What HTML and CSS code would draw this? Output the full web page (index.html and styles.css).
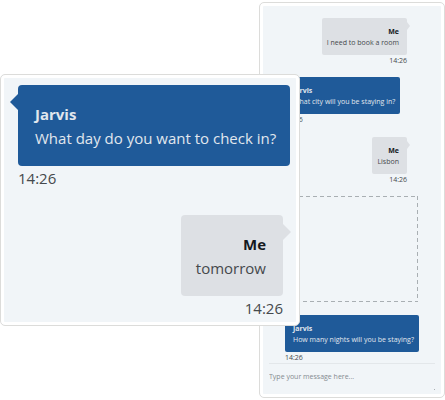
FILE: index.html
```html
<!DOCTYPE html>

<html lang="en">

<head>
    <title>Hotel chat bot</title>
    <meta charset="utf-8">

    <link rel="stylesheet" href="styles.css">
</head>

<body>
    <main class="stage">
        <section class="card chat">
            <div class="message me">
                <div class="bubble">
                    <strong>Me</strong>
                    <p>I need to book a room</p>
                </div>
                <time>14:26</time>
            </div>
            <div class="message bot">
                <div class="bubble">
                    <strong>Jarvis</strong>
                    <p>What city will you be staying in?</p>
                </div>
                <time>14:26</time>
            </div>
            <div class="message me">
                <div class="bubble">
                    <strong>Me</strong>
                    <p>Lisbon</p>
                </div>
                <time>14:26</time>
            </div>
            <svg class="selection" aria-hidden="true">
                <rect width="100%" height="100%" />
            </svg>
            <div class="message bot">
                <div class="bubble">
                    <strong>Jarvis</strong>
                    <p>How many nights will you be staying?</p>
                </div>
                <time>14:26</time>
            </div>
            <form class="compose">
                <textarea aria-label="Message" placeholder="Type your message here..."></textarea>
            </form>
        </section>

        <section class="card zoomed">
            <div class="message bot">
                <div class="bubble">
                    <strong>Jarvis</strong>
                    <p>What day do you want to check in?</p>
                </div>
                <time>14:26</time>
            </div>
            <div class="message me">
                <div class="bubble">
                    <strong>Me</strong>
                    <p>tomorrow</p>
                </div>
                <time>14:26</time>
            </div>
        </section>
    </main>
</body>

</html>
```

FILE: styles.css
```css
body {
    margin: 0;
    background: #fff;
    font-family: "Open Sans", "Noto Sans", sans-serif;
    color: #45494c;
}

p {
    margin: 0;
}

/* the zoomed card overlaps the chat in the middle column */
.stage {
    display: grid;
    grid-template-columns: 259fr 41fr 145fr;
    align-items: start;
}

.card {
    grid-row: 1;
    box-sizing: border-box;
    border: 1px solid #dcdcda;
    border-radius: 5px;
    background: #f1f5f8;
    box-shadow: inset 0 0 0 3px #fff;
}

.chat {
    grid-column: 2 / 4;
    margin-top: 2px;
    padding: 15px 9px 3px;
    font-size: 7px;
    line-height: 11px;
}

.zoomed {
    z-index: 1;
    grid-column: 1 / 3;
    margin-top: 74px;
    padding: 10px 9px 5px 17px;
    font-size: 15px;
    line-height: 24px;
}

.message {
    display: flex;
    flex-direction: column;
    align-items: flex-start;
}

.me {
    align-items: flex-end;
    text-align: right;
}

.bubble {
    position: relative;
    border-radius: 2px;
    padding: 8px 5px 7px 8px;
    white-space: nowrap;
}

.me .bubble {
    padding: 8px 8px 7px 5px;
}

.bubble strong {
    display: block;
}

.bot .bubble {
    background: #1f5a99;
    color: #e1e7ee;
}

.me .bubble {
    background: #dde0e4;
}

.me strong {
    color: #15191d;
}

.bubble::after {
    content: "";
    position: absolute;
    top: 4px;
    width: 3px;
    height: 8px;
}

.me .bubble::after {
    left: 100%;
    background: #dde0e4;
    clip-path: polygon(0 0, 100% 50%, 0 100%);
}

.bot .bubble::after {
    right: 100%;
    background: #1f5a99;
    clip-path: polygon(100% 0, 0 50%, 100% 100%);
}

.chat .message {
    margin: 0 28px 11px 16px;
}

.chat .bot {
    margin-right: 0;
    margin-bottom: 12px;
}

.chat .bot .bubble::after {
    display: none;
}

.chat .selection {
    display: block;
    box-sizing: border-box;
    width: 133px;
    height: 106px;
    margin: 0 0 13px 16px;
}

.selection rect {
    fill: none;
    stroke: #a9afb3;
    stroke-width: 2;
    stroke-dasharray: 4 3;
}

.chat .message:nth-last-child(2) {
    margin-bottom: 0;
}

.compose {
    border-top: 1px solid #e3e7ea;
    padding-top: 7px;
}

.compose textarea {
    display: block;
    box-sizing: border-box;
    width: 100%;
    height: 23px;
    border: 0;
    padding: 0;
    background: none;
    font: inherit;
    resize: none;
}

/* resize grip, just a speck at this size */
.compose::after {
    content: "";
    display: block;
    width: 1px;
    height: 1px;
    margin: -5px 0 4px auto;
    background: #a9afb3;
}

.compose textarea::placeholder {
    color: #858b90;
}

.zoomed .message + .message {
    margin: 25px 7px 0 0;
}

.zoomed .bubble {
    border-radius: 4px;
    padding: 17px 17px 16px;
}

.zoomed .me .bubble {
    padding-left: 15px;
}

.zoomed .bot .bubble {
    align-self: stretch;
    padding-right: 13px;
}

.zoomed .bubble::after {
    top: 9px;
    width: 8px;
    height: 16px;
}
```
